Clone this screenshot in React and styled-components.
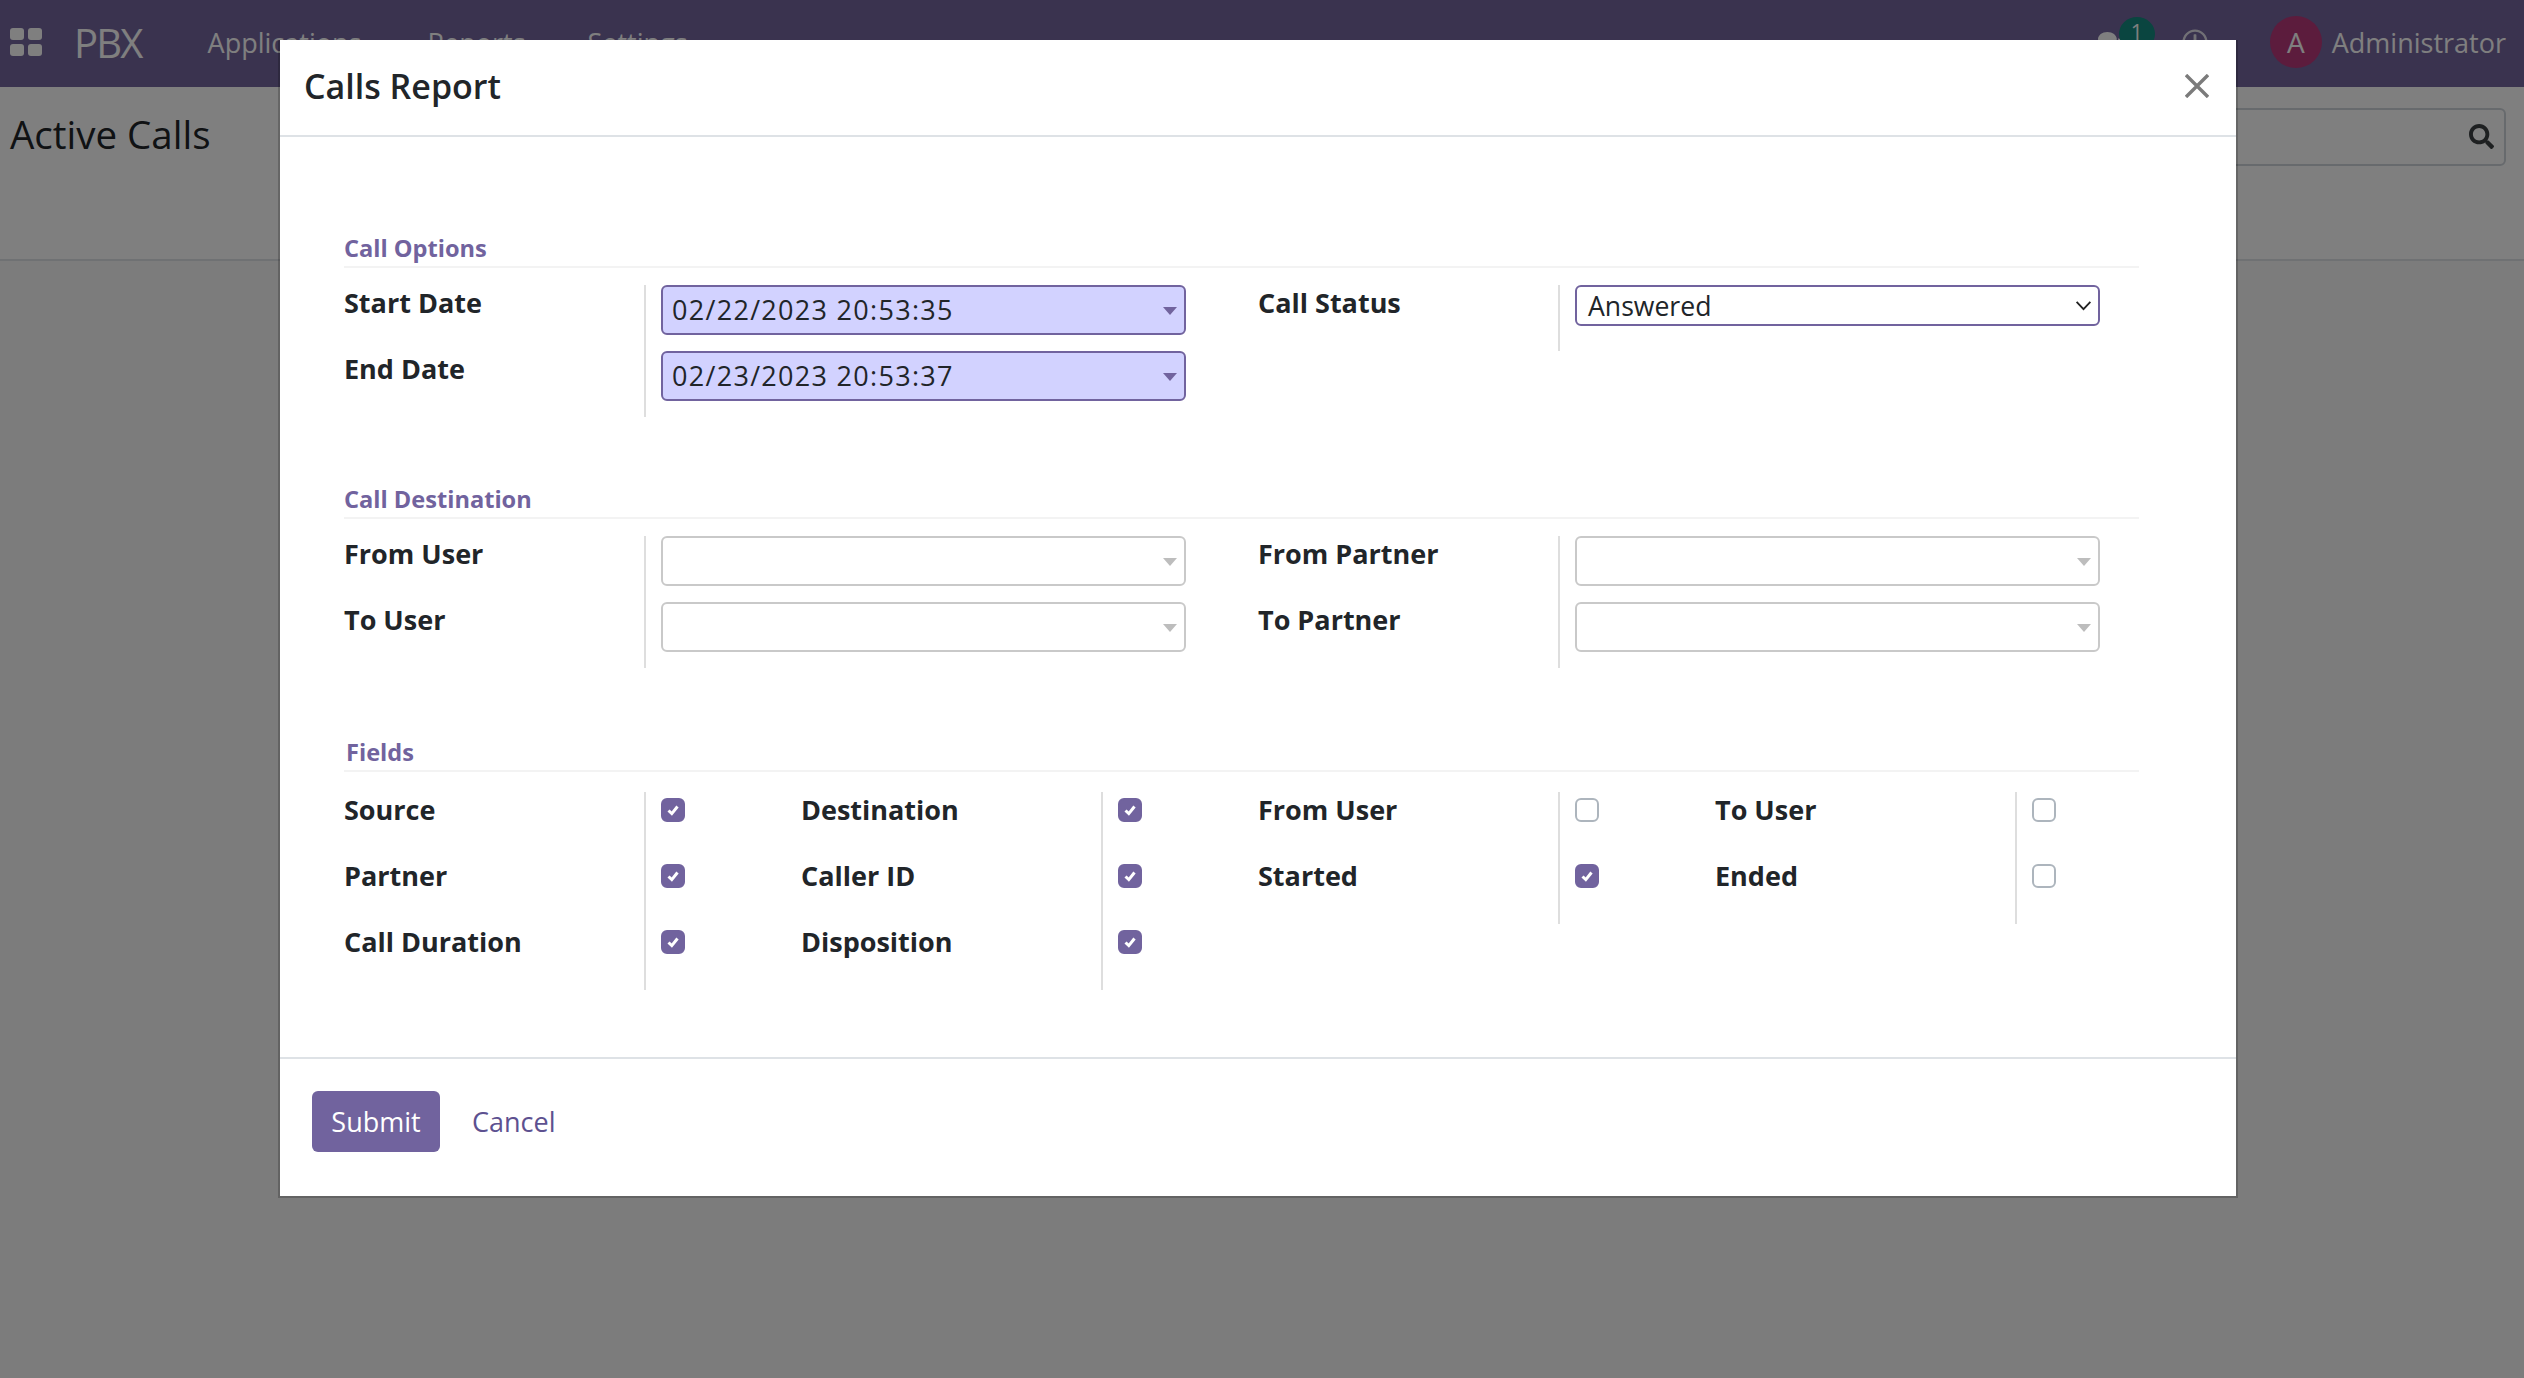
import React from "react";
import styled, { createGlobalStyle } from "styled-components";
import { FaSearch, FaComments, FaRegClock } from "react-icons/fa";

const GlobalStyle = createGlobalStyle`
  html, body {
    margin: 0;
    padding: 0;
    height: 100%;
    background: #fff;
    overflow: hidden;
  }
  body {
    font-family: "Open Sans", "Liberation Sans", sans-serif;
    color: #212529;
  }
`;

const Page = styled.div`
  display: flex;
  flex-direction: column;
  min-height: 100vh;
`;

const Navbar = styled.header`
  display: flex;
  align-items: center;
  height: 87px;
  padding: 0 18px 3px 10px;
  background: #74669f;
  color: #fff;
  box-sizing: border-box;
`;

const AppsIcon = styled.svg`
  width: 32px;
  height: 28px;
  fill: #fff;
`;

const Brand = styled.span`
  margin-left: 32px;
  font-size: 40px;
  font-weight: 400;
  letter-spacing: -1.8px;
`;

const NavLink = styled.span`
  margin-left: ${(p) => p.$gap}px;
  font-size: 27px;
`;

const NavRight = styled.div`
  display: flex;
  align-items: center;
  margin-left: auto;
`;

const ChatWrap = styled.div`
  position: relative;
  width: 40px;
  height: 40px;
  display: flex;
  align-items: center;
  font-size: 26px;
`;

const Badge = styled.span`
  position: absolute;
  left: 21px;
  top: -5px;
  width: 36px;
  height: 34px;
  border-radius: 50%;
  background: #148a80;
  font-size: 21px;
  text-align: center;
  line-height: 30px;
`;

const ClockIcon = styled(FaRegClock)`
  margin-left: 44px;
  font-size: 26px;
  opacity: 0.8;
`;

const Avatar = styled.span`
  display: flex;
  align-items: center;
  justify-content: center;
  width: 52px;
  height: 52px;
  margin-left: 62px;
  border-radius: 50%;
  background: #b8387a;
  font-size: 28px;
`;

const UserName = styled.span`
  margin-left: 10px;
  font-size: 27px;
`;

const ControlPanel = styled.section`
  display: flex;
  justify-content: space-between;
  height: 174px;
  padding: 21px 18px 0 10px;
  border-bottom: 2px solid #dee2e6;
  box-sizing: border-box;
`;

const PageTitle = styled.h1`
  margin: 0;
  font-size: 38.5px;
  font-weight: 400;
  line-height: 52px;
  color: #212529;
`;

const SearchBox = styled.div`
  display: flex;
  align-items: center;
  justify-content: flex-end;
  width: 900px;
  height: 58px;
  padding: 0 10px 2px 0;
  border: 2px solid #ced4da;
  border-radius: 6px;
  box-sizing: border-box;
  font-size: 25px;
  color: #3c4043;
`;

const Content = styled.main`
  flex: 1;
  background: #f8f8f8;
`;

const Backdrop = styled.div`
  position: fixed;
  inset: 0;
  padding: 40px 0 0 278px;
  background: rgba(0, 0, 0, 0.5);
`;

const Modal = styled.div`
  display: flex;
  flex-direction: column;
  width: 1960px;
  height: 1158px;
  border: 2px solid rgba(0, 0, 0, 0.2);
  border-top: 0;
  background-clip: padding-box;
  background-color: #fff;
  box-sizing: border-box;
`;

const ModalHeader = styled.div`
  display: flex;
  align-items: center;
  justify-content: space-between;
  height: 97px;
  padding: 0 27px 3px 24px;
  border-bottom: 2px solid #dee2e6;
  box-sizing: border-box;
`;

const ModalTitle = styled.h2`
  margin: 0;
  font-size: 34px;
  font-weight: 600;
  color: #212529;
`;

const CloseIcon = styled.svg`
  width: 24px;
  height: 24px;
  stroke: #7b7b7b;
  stroke-width: 3.4;
`;

const ModalBody = styled.div`
  flex: 1;
  padding: 95px 97px 0 64px;
`;

const SectionTitle = styled.div`
  height: 36px;
  margin-top: ${(p) => p.$top || 0}px;
  margin-bottom: ${(p) => p.$bottom || 17}px;
  padding-left: ${(p) => p.$indent || 0}px;
  border-bottom: 2px solid #f3f3f3;
  box-sizing: border-box;
  font-size: 23.6px;
  font-weight: 700;
  line-height: 32px;
  color: #71639e;
`;

const FormGrid = styled.div`
  display: grid;
  grid-template-columns: 300px 614px 300px 582px;
  grid-auto-rows: 66px;
`;

const FieldsGrid = styled.div`
  display: grid;
  grid-template-columns: repeat(3, 300px 157px) 300px 139px;
  grid-auto-rows: 66px;
`;

const Label = styled.div`
  font-size: 27px;
  font-weight: 700;
  line-height: 36px;
  color: #212529;
`;

const Value = styled.div`
  padding-left: 15px;
  border-left: 2px solid #dedede;
`;

const CheckValue = styled(Value)`
  padding-top: 6px;
`;

const ComboBox = styled.div`
  display: flex;
  align-items: center;
  width: 525px;
  height: 50px;
  padding: 0 7px 2px 9px;
  border: 2px solid ${(p) => (p.$required ? "#71639e" : "#c9c9c9")};
  border-radius: 6px;
  background: ${(p) => (p.$required ? "#d2d2ff" : "#fff")};
  box-sizing: border-box;
  font-size: 27px;
  letter-spacing: 1.3px;
  color: #212529;

  &::after {
    content: "";
    margin: 4px 0 0 auto;
    border-left: 7px solid transparent;
    border-right: 7px solid transparent;
    border-top: 8px solid ${(p) => (p.$required ? "#71639e" : "#bdbdbd")};
  }
`;

const SelectBox = styled.div`
  display: flex;
  align-items: center;
  justify-content: space-between;
  width: 525px;
  height: 41px;
  padding: 0 6px 0 11px;
  border: 2px solid #71639e;
  border-radius: 6px;
  box-sizing: border-box;
  font-size: 26.6px;
  color: #212529;
`;

const Chevron = styled.svg`
  width: 17px;
  height: 11px;
  fill: none;
  stroke: #222;
  stroke-width: 2;
`;

const CheckBox = styled.span`
  display: flex;
  align-items: center;
  justify-content: center;
  width: 24px;
  height: 24px;
  border: 2px solid ${(p) => (p.$on ? "#71639e" : "#adb5bd")};
  border-radius: 6px;
  background: ${(p) => (p.$on ? "#71639e" : "#fff")};
  box-sizing: border-box;
`;

const CheckMark = styled.svg`
  width: 14px;
  height: 14px;
  fill: none;
  stroke: #fff;
  stroke-width: 3;
`;

const ModalFooter = styled.div`
  display: flex;
  align-items: center;
  height: 139px;
  padding: 0 32px 13px;
  border-top: 2px solid #dee2e6;
  box-sizing: border-box;
`;

const PrimaryButton = styled.button`
  width: 128px;
  height: 61px;
  padding: 0;
  border: 0;
  border-radius: 6px;
  background: #71639e;
  color: #fff;
  font: 400 27px "Open Sans", sans-serif;
`;

const LinkButton = styled.button`
  margin-left: 32px;
  padding: 0;
  border: 0;
  background: none;
  color: #5d5190;
  font: 400 27px "Open Sans", sans-serif;
`;

const Check = ({ on }) => (
  <CheckBox $on={on}>
    {on && (
      <CheckMark viewBox="0 0 14 14">
        <path d="M2.5 7.5 L5.8 10.6 L11.5 3.5" />
      </CheckMark>
    )}
  </CheckBox>
);

const fields = [
  ["Source", true],
  ["Destination", true],
  ["From User", false],
  ["To User", false],
  ["Partner", true],
  ["Caller ID", true],
  ["Started", true],
  ["Ended", false],
  ["Call Duration", true],
  ["Disposition", true],
];

const App = () => {
  return (
    <Page>
      <GlobalStyle />
      <Navbar>
        <AppsIcon viewBox="0 0 32 28">
          <rect x="0" y="0" width="14" height="12" rx="3" />
          <rect x="18" y="0" width="14" height="12" rx="3" />
          <rect x="0" y="16" width="14" height="12" rx="3" />
          <rect x="18" y="16" width="14" height="12" rx="3" />
        </AppsIcon>
        <Brand>PBX</Brand>
        <NavLink $gap={66}>Applications</NavLink>
        <NavLink $gap={66}>Reports</NavLink>
        <NavLink $gap={62}>Settings</NavLink>
        <NavRight>
          <ChatWrap>
            <FaComments />
            <Badge>1</Badge>
          </ChatWrap>
          <ClockIcon />
          <Avatar>A</Avatar>
          <UserName>Administrator</UserName>
        </NavRight>
      </Navbar>
      <ControlPanel>
        <PageTitle>Active Calls</PageTitle>
        <SearchBox>
          <FaSearch />
        </SearchBox>
      </ControlPanel>
      <Content />
      <Backdrop>
        <Modal>
          <ModalHeader>
            <ModalTitle>Calls Report</ModalTitle>
            <CloseIcon viewBox="0 0 24 24">
              <path d="M1 1 L23 23 M23 1 L1 23" />
            </CloseIcon>
          </ModalHeader>
          <ModalBody>
            <SectionTitle>Call Options</SectionTitle>
            <FormGrid>
              <Label>Start Date</Label>
              <Value>
                <ComboBox $required>02/22/2023 20:53:35</ComboBox>
              </Value>
              <Label>Call Status</Label>
              <Value>
                <SelectBox>
                  Answered
                  <Chevron viewBox="0 0 18 12">
                    <path d="M1.5 2 L9 10 L16.5 2" />
                  </Chevron>
                </SelectBox>
              </Value>
              <Label>End Date</Label>
              <Value>
                <ComboBox $required>02/23/2023 20:53:37</ComboBox>
              </Value>
            </FormGrid>
            <SectionTitle $top={66}>Call Destination</SectionTitle>
            <FormGrid>
              <Label>From User</Label>
              <Value>
                <ComboBox />
              </Value>
              <Label>From Partner</Label>
              <Value>
                <ComboBox />
              </Value>
              <Label>To User</Label>
              <Value>
                <ComboBox />
              </Value>
              <Label>To Partner</Label>
              <Value>
                <ComboBox />
              </Value>
            </FormGrid>
            <SectionTitle $top={68} $bottom={20} $indent={2}>
              Fields
            </SectionTitle>
            <FieldsGrid>
              {fields.map(([name, on]) => (
                <React.Fragment key={name}>
                  <Label>{name}</Label>
                  <CheckValue>
                    <Check on={on} />
                  </CheckValue>
                </React.Fragment>
              ))}
            </FieldsGrid>
          </ModalBody>
          <ModalFooter>
            <PrimaryButton>Submit</PrimaryButton>
            <LinkButton>Cancel</LinkButton>
          </ModalFooter>
        </Modal>
      </Backdrop>
    </Page>
  );
};

export default App;
